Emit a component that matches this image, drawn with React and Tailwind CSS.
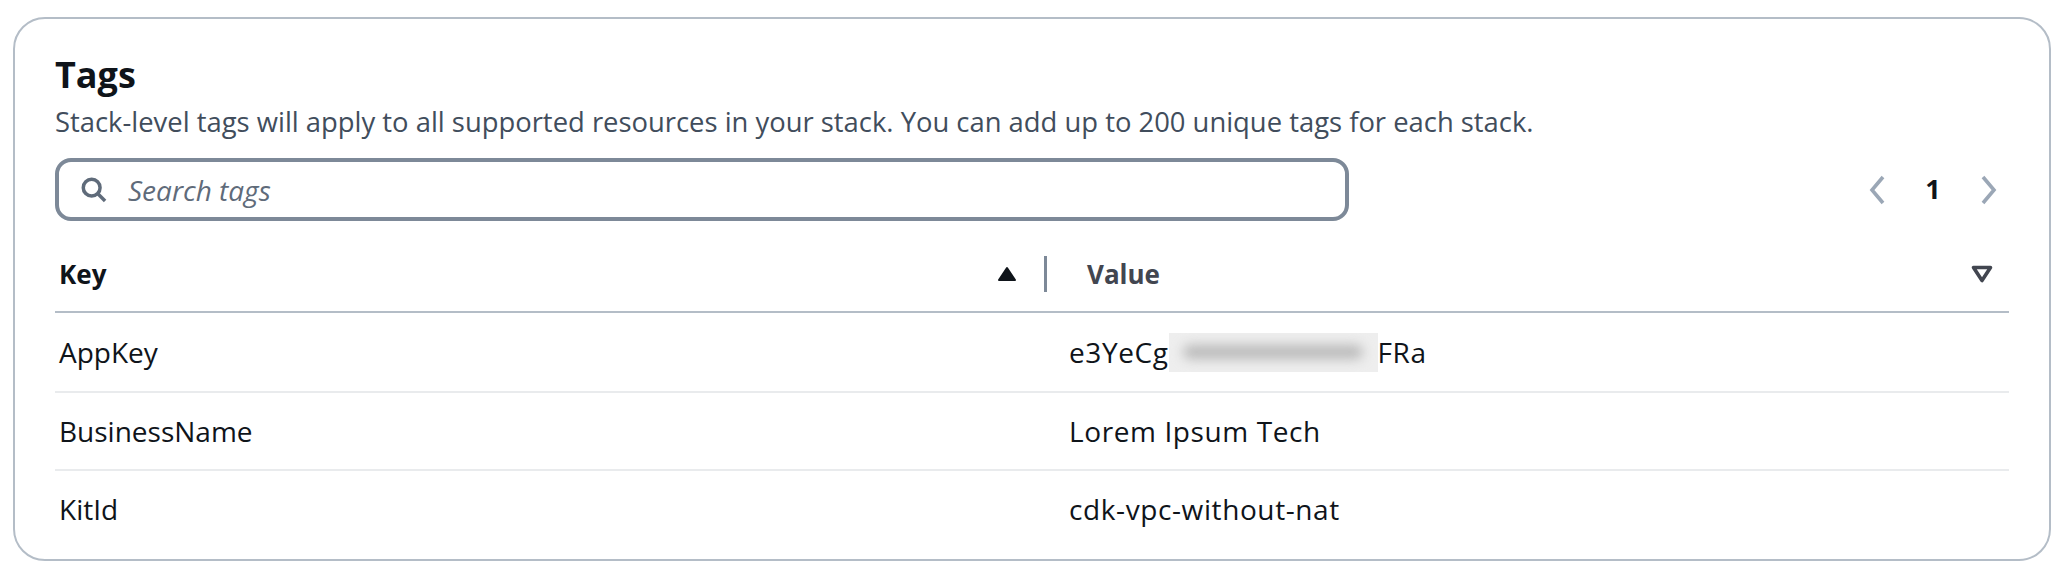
import { useState } from "react";

const rows = [
  { key: "AppKey", value: "e3YeCg", hidden: true, tail: "FRa" },
  { key: "BusinessName", value: "Lorem Ipsum Tech" },
  { key: "KitId", value: "cdk-vpc-without-nat" },
];

function SearchIcon() {
  return (
    <svg width="28" height="28" viewBox="0 0 24 24" fill="none">
      <circle cx="10" cy="10" r="7.2" stroke="#5f6b7a" strokeWidth="3" />
      <path d="M15.3 15.3 L21.5 21.5" stroke="#5f6b7a" strokeWidth="3" />
    </svg>
  );
}

function Chevron({ dir }) {
  return (
    <svg width="20" height="30" viewBox="0 0 20 30" fill="none">
      {dir === "left" ? (
        <path d="M16 2 L5 15 L16 28" stroke="#9ba7b6" strokeWidth="3.6" />
      ) : (
        <path d="M4 2 L15 15 L4 28" stroke="#9ba7b6" strokeWidth="3.6" />
      )}
    </svg>
  );
}

function SortUp() {
  return (
    <svg width="20" height="16" viewBox="0 0 20 16">
      <path
        d="M10 2 L18 14 L2 14 Z"
        fill="#0f141a"
        stroke="#0f141a"
        strokeWidth="2"
        strokeLinejoin="round"
      />
    </svg>
  );
}

function SortDown() {
  return (
    <svg width="22" height="18" viewBox="0 0 22 18" fill="none">
      <path
        d="M2.5 2.5 L19.5 2.5 L11 15.5 Z"
        stroke="#424650"
        strokeWidth="3.6"
        strokeLinejoin="round"
      />
    </svg>
  );
}

export default function App() {
  const [query, setQuery] = useState("");

  return (
    <div className="w-[2066px] h-[570px] bg-white pt-[17px] pl-[13px] font-['Open_Sans',sans-serif]">
      <div className="w-[2038px] border-2 border-[#b4bdc7] rounded-[32px] pt-[34px] px-[40px] pb-[12px]">
        <h2 className="text-[36px] leading-[43px] font-bold text-[#0f141a]">Tags</h2>
        <p className="mt-[8px] text-[27.4px] leading-[36px] text-[#414d5c]">
          Stack-level tags will apply to all supported resources in your stack. You can add up to 200 unique tags for each stack.
        </p>

        {/* Search + pagination */}
        <div className="mt-[18px] flex items-center">
          <div className="w-[1294px] h-[63px] border-4 border-[#7d8998] rounded-[16px] flex items-center pl-[21px]">
            <SearchIcon />
            <input
              value={query}
              onChange={(e) => setQuery(e.target.value)}
              placeholder="Search tags"
              className="ml-[20px] flex-1 bg-transparent outline-none text-[28px] italic text-[#0f141a] placeholder:text-[#5f6b7a]"
            />
          </div>
          <div className="ml-auto flex items-center pr-[10px]">
            <Chevron dir="left" />
            <span className="w-[92px] text-center text-[27px] font-bold text-[#0f141a]">1</span>
            <Chevron dir="right" />
          </div>
        </div>

        {/* Table */}
        <div className="mt-[16px]">
          <div className="flex items-center h-[76px] border-b-2 border-[#b4bdc7]">
            <div className="w-[989px] flex items-center pl-[4px] pr-[27px]">
              <span className="text-[26px] font-bold text-[#0f141a]">Key</span>
              <span className="ml-auto flex">
                <SortUp />
              </span>
            </div>
            <div className="w-[3px] h-[36px] bg-[#7d8998]" />
            <div className="flex-1 flex items-center pl-[40px] pr-[16px]">
              <span className="text-[26px] font-bold text-[#424650]">Value</span>
              <span className="ml-auto flex">
                <SortDown />
              </span>
            </div>
          </div>

          {rows.map((row, i) => (
            <div
              key={row.key}
              className={
                i === 0
                  ? "flex items-center h-[78px] text-[28px] text-[#0f141a]"
                  : "flex items-center h-[78px] border-t-2 border-[#e9ebed] text-[28px] text-[#0f141a]"
              }
            >
              <div className="w-[989px] pl-[4px]">{row.key}</div>
              <div className="flex-1 pl-[25px] flex items-center tracking-[0.6px]">
                <span>{row.value}</span>
                {row.hidden && (
                  <>
                    <span className="w-[209px] h-[39px] bg-[#eeeeee] overflow-hidden flex items-center justify-center">
                      <span className="block w-[180px] h-[14px] rounded-full bg-[#b9b9b9] blur-[6px]" />
                    </span>
                    <span>{row.tail}</span>
                  </>
                )}
              </div>
            </div>
          ))}
        </div>
      </div>
    </div>
  );
}
